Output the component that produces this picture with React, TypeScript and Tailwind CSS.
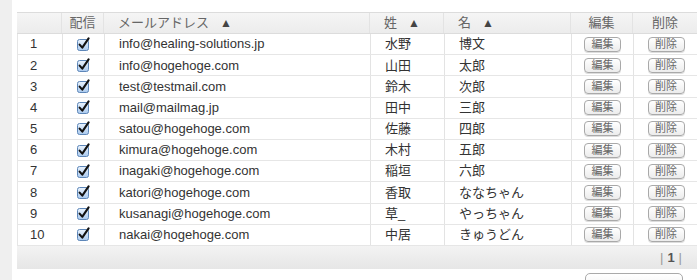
import React from 'react';

const rows = [
  { id: 1, email: 'info@healing-solutions.jp', sei: '水野', mei: '博文' },
  { id: 2, email: 'info@hogehoge.com', sei: '山田', mei: '太郎' },
  { id: 3, email: 'test@testmail.com', sei: '鈴木', mei: '次郎' },
  { id: 4, email: 'mail@mailmag.jp', sei: '田中', mei: '三郎' },
  { id: 5, email: 'satou@hogehoge.com', sei: '佐藤', mei: '四郎' },
  { id: 6, email: 'kimura@hogehoge.com', sei: '木村', mei: '五郎' },
  { id: 7, email: 'inagaki@hogehoge.com', sei: '稲垣', mei: '六郎' },
  { id: 8, email: 'katori@hogehoge.com', sei: '香取', mei: 'ななちゃん' },
  { id: 9, email: 'kusanagi@hogehoge.com', sei: '草_', mei: 'やっちゃん' },
  { id: 10, email: 'nakai@hogehoge.com', sei: '中居', mei: 'きゅうどん' },
];

const grid = 'grid grid-cols-[45px_42px_266px_74px_127px_62px_64px]';
const cell = 'flex items-center border-r border-[#e3e3e3] last:border-r-0';

function Check() {
  return (
    <svg width="15" height="15" viewBox="0 0 15 15">
      <defs>
        <linearGradient id="cb" x1="0" y1="0" x2="0" y2="1">
          <stop offset="0" stopColor="#eaf3fd" />
          <stop offset="1" stopColor="#a9c9ee" />
        </linearGradient>
      </defs>
      <rect x="1.5" y="2.5" width="11" height="11" rx="2" fill="url(#cb)" stroke="#5d86b8" />
      <path d="M3.6 7.6 L6.3 10.6 L12.6 1.4" fill="none" stroke="#111" strokeWidth="2.1" strokeLinecap="round" strokeLinejoin="round" />
    </svg>
  );
}

function SmallButton({ label }: { label: string }) {
  return (
    <button className="h-[15px] w-[37px] rounded-[4px] border border-[#a9a9a9] bg-gradient-to-b from-white to-[#ececec] text-[11px] leading-none text-[#666] shadow-[0_1px_0_#ddd]">
      {label}
    </button>
  );
}

function Sort() {
  return <span className="ml-[11px] text-[12px] leading-none text-[#444]">▲</span>;
}

export default function App() {
  return (
    <div
      className="flex h-[280px] w-[700px] overflow-hidden bg-white text-[13px] text-[#333]"
      style={{ fontFamily: '"Liberation Sans", "Noto Sans CJK JP", sans-serif' }}
    >
      <div className="w-[12px] shrink-0 bg-[#efefef]" />
      <div className="pl-[5px] pt-[12px]">
        <div className="w-[680px] border-t border-[#dcdcdc]">
          {/* header */}
          <div className={`${grid} h-[21px] border-b border-[#dcdcdc] bg-gradient-to-b from-[#f5f5f5] to-[#ececec] text-[#666]`}>
            <div className={cell} />
            <div className={`${cell} justify-center`}>配信</div>
            <div className={`${cell} pl-[14px]`}>
              メールアドレス<Sort />
            </div>
            <div className={`${cell} pl-[14px]`}>
              姓<Sort />
            </div>
            <div className={`${cell} pl-[14px]`}>
              名<Sort />
            </div>
            <div className={`${cell} justify-center`}>編集</div>
            <div className={`${cell} justify-center`}>削除</div>
          </div>

          {/* body */}
          {rows.map((r) => (
            <div key={r.id} className={`${grid} h-[21.2px] border-b border-[#e6e6e6] border-l border-l-[#e6e6e6]`}>
              <div className={`${cell} pl-[12px]`}>{r.id}</div>
              <div className={`${cell} justify-center`}>
                <Check />
              </div>
              <div className={`${cell} pl-[14px]`}>{r.email}</div>
              <div className={`${cell} pl-[14px]`}>{r.sei}</div>
              <div className={`${cell} pl-[14px]`}>{r.mei}</div>
              <div className={`${cell} justify-center`}>
                <SmallButton label="編集" />
              </div>
              <div className={`${cell} justify-center`}>
                <SmallButton label="削除" />
              </div>
            </div>
          ))}

          {/* pager */}
          <div className="flex h-[23px] items-center justify-end bg-gradient-to-b from-[#f3f3f3] to-[#e6e6e6] pr-[15px] text-[#555]">
            <span className="text-[#999]">|</span>
            <span className="mx-[4px] font-bold">1</span>
            <span className="text-[#999]">|</span>
          </div>
        </div>

        <div className="mt-[4px] flex justify-end pr-[14px]">
          <button className="h-[22px] w-[98px] rounded-[5px] border border-[#aaa] bg-gradient-to-b from-white to-[#eee] pt-[6px] text-[12px] leading-none text-[#444]">
            一括登録
          </button>
        </div>
      </div>
    </div>
  );
}
